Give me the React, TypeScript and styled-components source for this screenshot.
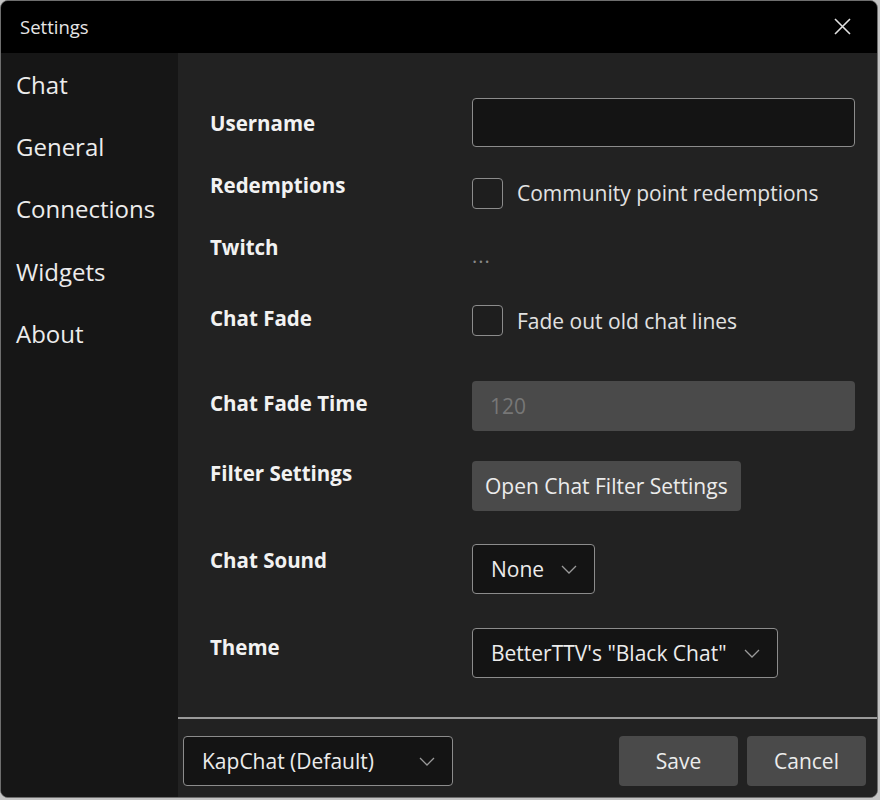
import React from "react";
import styled, { createGlobalStyle } from "styled-components";

const Global = createGlobalStyle`
  html, body { margin: 0; padding: 0; background: #c4c4c4; }
  body { font-family: "Open Sans", "Noto Sans", Arial, sans-serif; }
  * { box-sizing: border-box; }
`;

const Window = styled.div`
  width: 878px;
  height: 798px;
  display: flex;
  flex-direction: column;
  border: 1px solid #6e6e6e;
  border-radius: 8px;
  overflow: hidden;
  background: #222222;
  color: #e4e4e4;
`;

const TitleBar = styled.div`
  height: 52px;
  flex: none;
  background: #000;
  display: flex;
  align-items: center;
  justify-content: space-between;
  padding: 0 26px 2px 19px;
`;

const Title = styled.span`
  font-size: 18.5px;
  color: #e6e6e6;
`;

const CloseIcon = styled.svg`
  width: 17px;
  height: 17px;
  display: block;
`;

const Body = styled.div`
  flex: 1;
  display: flex;
  min-height: 0;
`;

const Sidebar = styled.nav`
  width: 177px;
  flex: none;
  background: #161616;
  display: flex;
  flex-direction: column;
`;

const NavItem = styled.div`
  height: 62.3px;
  display: flex;
  align-items: center;
  padding-left: 15px;
  font-size: 24px;
  color: #ececec;
`;

const Main = styled.div`
  flex: 1;
  display: flex;
  flex-direction: column;
  background: #222222;
`;

const Form = styled.div`
  flex: 1;
  display: flex;
  flex-direction: column;
  padding: 45px 0 0 32px;
`;

const Row = styled.div<{ $gap: number }>`
  display: flex;
  align-items: center;
  margin-top: ${(p) => p.$gap}px;
`;

const Label = styled.div<{ $lift: number }>`
  width: 262px;
  flex: none;
  font-size: 20.5px;
  font-weight: 700;
  line-height: 24px;
  color: #f2f2f2;
  margin-bottom: ${(p) => p.$lift * 2}px;
`;

const TextInput = styled.div<{ $disabled?: boolean }>`
  width: 383px;
  height: ${(p) => (p.$disabled ? 50 : 49)}px;
  border-radius: 4px;
  background: ${(p) => (p.$disabled ? "#4a4a4a" : "#141414")};
  border: ${(p) => (p.$disabled ? "none" : "1.5px solid #8c8c8c")};
  display: flex;
  align-items: center;
  padding-left: 18px;
  font-size: 21px;
  color: #777;
`;

const CheckWrap = styled.label`
  display: flex;
  align-items: center;
  gap: 14px;
  font-size: 21px;
  color: #e2e2e2;
`;

const CheckBox = styled.span`
  width: 31px;
  height: 31px;
  border: 1.5px solid #8c8c8c;
  border-radius: 4px;
  background: #1e1e1e;
  flex: none;
`;

const Dots = styled.span`
  font-size: 20px;
  color: #8a8a8a;
  line-height: 24px;
  padding-top: 2px;
  letter-spacing: 1px;
`;

const Button = styled.div<{ $w?: number }>`
  height: 50px;
  ${(p) => (p.$w ? `width: ${p.$w}px;` : "padding: 0 13px;")}
  background: #4a4a4a;
  border-radius: 4px;
  display: flex;
  align-items: center;
  justify-content: center;
  font-size: 21px;
  color: #ececec;
`;

const Select = styled.div<{ $w?: number }>`
  height: 50px;
  ${(p) => (p.$w ? `width: ${p.$w}px; justify-content: space-between;` : "gap: 17px;")}
  display: flex;
  align-items: center;
  padding: 0 17px 0 18px;
  background: #141414;
  border: 1.5px solid #8c8c8c;
  border-radius: 4px;
  font-size: 21px;
  color: #ececec;
`;

const Chevron = styled.svg`
  width: 16px;
  height: 9px;
  display: block;
  flex: none;
`;

const Footer = styled.div`
  height: 80px;
  flex: none;
  border-top: 2px solid #9a9a9a;
  display: flex;
  align-items: flex-start;
  justify-content: space-between;
  padding: 17px 11px 0 5px;
`;

const FooterButtons = styled.div`
  display: flex;
  gap: 9px;
`;

const ChevronDown = () => (
  <Chevron viewBox="0 0 16 9">
    <polyline points="1,1 8,8 15,1" fill="none" stroke="#9a9a9a" strokeWidth="1.3" />
  </Chevron>
);

export default function App() {
  return (
    <>
      <Global />
      <Window>
        <TitleBar>
          <Title>Settings</Title>
          <CloseIcon viewBox="0 0 17 17">
            <path d="M1 1 L16 16 M16 1 L1 16" stroke="#e0e0e0" strokeWidth="1.6" />
          </CloseIcon>
        </TitleBar>
        <Body>
          <Sidebar>
            <NavItem>Chat</NavItem>
            <NavItem>General</NavItem>
            <NavItem>Connections</NavItem>
            <NavItem>Widgets</NavItem>
            <NavItem>About</NavItem>
          </Sidebar>
          <Main>
            <Form>
              <Row $gap={0}>
                <Label $lift={0}>Username</Label>
                <TextInput />
              </Row>
              <Row $gap={26}>
                <Label $lift={8}>Redemptions</Label>
                <CheckWrap>
                  <CheckBox />
                  Community point redemptions
                </CheckWrap>
              </Row>
              <Row $gap={22}>
                <Label $lift={8}>Twitch</Label>
                <Dots>...</Dots>
              </Row>
              <Row $gap={30}>
                <Label $lift={3}>Chat Fade</Label>
                <CheckWrap>
                  <CheckBox />
                  Fade out old chat lines
                </CheckWrap>
              </Row>
              <Row $gap={45}>
                <Label $lift={3}>Chat Fade Time</Label>
                <TextInput $disabled>120</TextInput>
              </Row>
              <Row $gap={30}>
                <Label $lift={13}>Filter Settings</Label>
                <Button>Open Chat Filter Settings</Button>
              </Row>
              <Row $gap={33}>
                <Label $lift={9}>Chat Sound</Label>
                <Select>
                  None
                  <ChevronDown />
                </Select>
              </Row>
              <Row $gap={34}>
                <Label $lift={6}>Theme</Label>
                <Select>
                  BetterTTV's "Black Chat"
                  <ChevronDown />
                </Select>
              </Row>
            </Form>
            <Footer>
              <Select $w={270}>
                KapChat (Default)
                <ChevronDown />
              </Select>
              <FooterButtons>
                <Button $w={119}>Save</Button>
                <Button $w={119}>Cancel</Button>
              </FooterButtons>
            </Footer>
          </Main>
        </Body>
      </Window>
    </>
  );
}
